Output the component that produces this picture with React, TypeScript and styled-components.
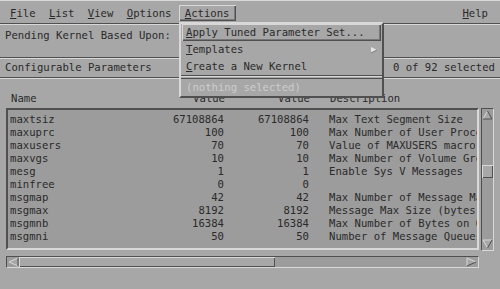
import React from "react";
import styled, { createGlobalStyle } from "styled-components";

const BG = "#a7a7a7";
const LIST_BG = "#9c9c9c";
const LIGHT = "#d8d8d8";
const DARK = "#505050";
const INK = "#2a2a2a";

const Global = createGlobalStyle`
  html, body { margin: 0; padding: 0; background: ${BG}; }
  body {
    width: 500px; height: 289px; overflow: hidden;
    font-family: "DejaVu Sans Mono", "Liberation Mono", monospace;
    font-size: 10.6px; color: ${INK};
  }
  * { box-sizing: border-box; }
`;

const Window = styled.div`
  position: relative;
  width: 500px;
  height: 289px;
  background: ${BG};
  display: flex;
  flex-direction: column;
`;

const MenuBar = styled.div`
  height: 23px;
  border-top: 1px solid ${LIGHT};
  display: flex;
  align-items: center;
  padding: 0 6px 0 4px;
  gap: 1.4px;
`;

const MenuItem = styled.div<{ $active?: boolean }>`
  height: 16px;
  line-height: 16px;
  padding: 0 6px;
  margin-top: 1px;
  white-space: nowrap;
  box-shadow: ${(p) =>
    p.$active ? `inset 1px 1px 0 ${LIGHT}, inset -1px -1px 0 ${DARK}, inset -2px -2px 0 #7a7a7a` : "none"};
`;

const Spacer = styled.div`
  flex: 1;
`;

const U = styled.span`
  text-decoration: underline;
  text-underline-offset: 1px;
`;

const Etch = styled.div`
  height: 2px;
  border-top: 1px solid ${DARK};
  border-bottom: 1px solid ${LIGHT};
`;

const PendingRow = styled.div`
  height: 32px;
  padding: 4px 5px 0;
  line-height: 13px;
  white-space: nowrap;
`;

const StatusRow = styled.div`
  height: 18px;
  padding: 2px 5px 0;
  line-height: 13px;
  display: flex;
  justify-content: space-between;
  white-space: nowrap;
`;

const Columns = styled.div`
  display: grid;
  grid-template-columns: 140px 74px 85px 1fr;
  height: 13px;
  line-height: 13px;
  white-space: nowrap;
`;

const HeaderRow = styled(Columns)`
  margin: 13px 0 0 11px;
  height: 16px;
`;

const Cell = styled.div<{ $num?: boolean; $desc?: boolean }>`
  overflow: hidden;
  text-align: ${(p) => (p.$num ? "right" : "left")};
  padding-left: ${(p) => (p.$desc ? "20px" : "0")};
`;

const ListArea = styled.div`
  display: flex;
  margin-left: 6px;
  height: 144px;
  gap: 2px;
`;

const ListBox = styled.div`
  width: 473px;
  height: 142px;
  background: ${LIST_BG};
  border: 2px solid;
  border-color: ${DARK} ${LIGHT} ${LIGHT} ${DARK};
  padding: 3px 0 0 2px;
  overflow: hidden;
`;

const VScroll = styled.div`
  width: 13px;
  height: 143px;
  background: ${LIST_BG};
  border: 1px solid;
  border-color: ${DARK} ${LIGHT} ${LIGHT} ${DARK};
  display: flex;
  flex-direction: column;
  padding: 1px 0;
`;

const Trough = styled.div`
  flex: 1;
  position: relative;
`;

const VThumb = styled.div<{ $top: number }>`
  position: absolute;
  left: 0;
  right: 0;
  top: ${(p) => p.$top}px;
  height: 13px;
  background: ${BG};
  box-shadow: inset 1px 1px 0 ${LIGHT}, inset -1px -1px 0 ${DARK};
`;

const HScroll = styled.div`
  margin: 4px 0 0 6px;
  width: 473px;
  height: 12px;
  background: ${LIST_BG};
  border: 1px solid;
  border-color: ${DARK} ${LIGHT} ${LIGHT} ${DARK};
  display: flex;
  align-items: stretch;
  padding: 0 1px;
`;

const HThumb = styled.div<{ $width: number }>`
  width: ${(p) => p.$width}px;
  background: ${BG};
  box-shadow: inset 1px 1px 0 ${LIGHT}, inset -1px -1px 0 ${DARK};
`;

const ArrowBox = styled.div`
  width: 11px;
  height: 10px;
  flex: none;
  display: flex;
  align-items: center;
  justify-content: center;
`;

const Dropdown = styled.div`
  position: absolute;
  left: 179px;
  top: 22px;
  width: 205px;
  background: ${BG};
  border: 2px solid;
  border-color: ${LIGHT} ${DARK} ${DARK} ${LIGHT};
  display: flex;
  flex-direction: column;
`;

const DropItem = styled.div<{ $active?: boolean; $disabled?: boolean }>`
  height: 17px;
  line-height: 17px;
  padding: 0 3px 0 4px;
  margin: 0 1px;
  white-space: nowrap;
  display: flex;
  justify-content: space-between;
  align-items: center;
  color: ${(p) => (p.$disabled ? "#cdcdcd" : INK)};
  box-shadow: ${(p) =>
    p.$active ? `inset 1px 1px 0 ${LIGHT}, inset -1px -1px 0 ${DARK}, inset -2px -2px 0 #777` : "none"};
`;

const DropSep = styled.div`
  height: 4px;
  border-top: 1px solid ${DARK};
  border-bottom: 1px solid ${DARK};
  background: ${BG};
  box-shadow: inset 0 1px 0 ${LIGHT};
`;

const ArrowUp = () => (
  <svg width="11" height="10" viewBox="0 0 11 10">
    <polygon points="5.5,1 10,9 1,9" fill={BG} />
    <polyline points="1,9 5.5,1" stroke={LIGHT} fill="none" />
    <polyline points="5.5,1 10,9 1,9" stroke={DARK} fill="none" />
  </svg>
);

const ArrowDown = () => (
  <svg width="11" height="10" viewBox="0 0 11 10">
    <polygon points="1,1 10,1 5.5,9" fill={BG} />
    <polyline points="5.5,9 1,1 10,1" stroke={LIGHT} fill="none" />
    <polyline points="10,1 5.5,9" stroke={DARK} fill="none" />
  </svg>
);

const ArrowLeft = () => (
  <svg width="11" height="10" viewBox="0 0 11 10">
    <polygon points="1,5 10,1 10,9" fill={BG} />
    <polyline points="10,9 1,5 10,1" stroke={LIGHT} fill="none" />
    <polyline points="10,1 10,9" stroke={DARK} fill="none" />
  </svg>
);

const ArrowRight = () => (
  <svg width="11" height="10" viewBox="0 0 11 10">
    <polygon points="1,1 10,5 1,9" fill={BG} />
    <polyline points="1,9 1,1 10,5" stroke={LIGHT} fill="none" />
    <polyline points="10,5 1,9" stroke={DARK} fill="none" />
  </svg>
);

const Cascade = () => (
  <svg width="8" height="8" viewBox="0 0 8 8">
    <polygon points="1,1 7,4 1,7" fill="#e4e4e4" />
    <polyline points="7,4 1,7" stroke="#7a7a7a" fill="none" />
  </svg>
);

const rows: [string, string, string, string][] = [
  ["maxtsiz", "67108864", "67108864", "Max Text Segment Size"],
  ["maxuprc", "100", "100", "Max Number of User Processes"],
  ["maxusers", "70", "70", "Value of MAXUSERS macro"],
  ["maxvgs", "10", "10", "Max Number of Volume Groups"],
  ["mesg", "1", "1", "Enable Sys V Messages"],
  ["minfree", "0", "0", ""],
  ["msgmap", "42", "42", "Max Number of Message Map Entries"],
  ["msgmax", "8192", "8192", "Message Max Size (bytes)"],
  ["msgmnb", "16384", "16384", "Max Number of Bytes on Queue"],
  ["msgmni", "50", "50", "Number of Message Queues"],
];

export default function App() {
  return (
    <Window>
      <Global />
      <MenuBar>
        <MenuItem><U>F</U>ile</MenuItem>
        <MenuItem><U>L</U>ist</MenuItem>
        <MenuItem><U>V</U>iew</MenuItem>
        <MenuItem><U>O</U>ptions</MenuItem>
        <MenuItem $active><U>A</U>ctions</MenuItem>
        <Spacer />
        <MenuItem><U>H</U>elp</MenuItem>
      </MenuBar>
      <Etch />
      <PendingRow>Pending Kernel Based Upon:</PendingRow>
      <Etch />
      <StatusRow>
        <span>Configurable Parameters</span>
        <span>0 of 92 selected</span>
      </StatusRow>
      <Etch />
      <HeaderRow>
        <Cell>Name</Cell>
        <Cell $num>Value</Cell>
        <Cell $num>Value</Cell>
        <Cell $desc>Description</Cell>
      </HeaderRow>
      <ListArea>
        <ListBox>
          {rows.map((r) => (
            <Columns key={r[0]}>
              <Cell>{r[0]}</Cell>
              <Cell $num>{r[1]}</Cell>
              <Cell $num>{r[2]}</Cell>
              <Cell $desc>{r[3]}</Cell>
            </Columns>
          ))}
        </ListBox>
        <VScroll>
          <ArrowBox><ArrowUp /></ArrowBox>
          <Trough>
            <VThumb $top={45} />
          </Trough>
          <ArrowBox><ArrowDown /></ArrowBox>
        </VScroll>
      </ListArea>
      <HScroll>
        <ArrowBox><ArrowLeft /></ArrowBox>
        <HThumb $width={256} />
        <Spacer />
        <ArrowBox><ArrowRight /></ArrowBox>
      </HScroll>
      <Dropdown>
        <DropItem $active><span><U>A</U>pply Tuned Parameter Set...</span></DropItem>
        <DropItem><span><U>T</U>emplates</span><Cascade /></DropItem>
        <DropItem><span><U>C</U>reate a New Kernel</span></DropItem>
        <DropSep />
        <DropItem $disabled><span>(nothing selected)</span></DropItem>
      </Dropdown>
    </Window>
  );
}
